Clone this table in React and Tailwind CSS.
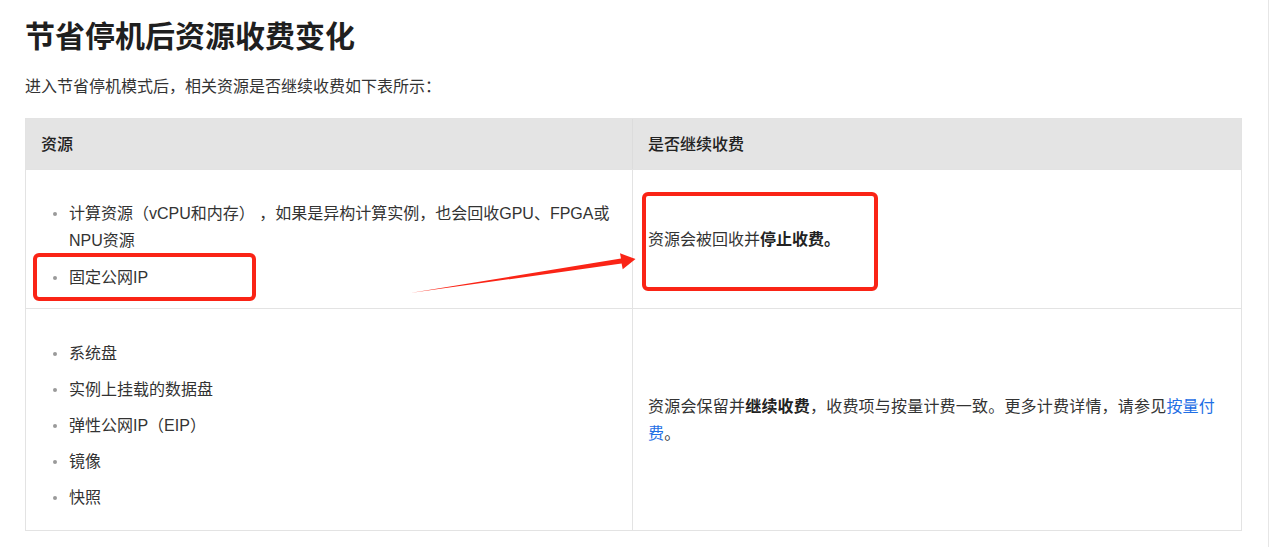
import React from "react";

const font = { fontFamily: '"Liberation Sans", "Noto Sans CJK SC", sans-serif' };

function Item({ children, wide }) {
  return (
    <li className={wide ? "flex items-start mt-[10px] first:mt-0" : "flex items-start mt-[9px] first:mt-0"}>
      <span className="w-[4px] h-[4px] rounded-full bg-[#9a9a9a] mt-[12px] mr-[12px] shrink-0" />
      <span>{children}</span>
    </li>
  );
}

export default function App() {
  return (
    <div
      className="relative w-[1269px] h-[547px] border-r border-[#e6e6e6] bg-white text-[#333] overflow-hidden"
      style={font}
    >
      <div className="pl-[25px] pt-[17px]">
        <h1 className="text-[30px] leading-[40px] font-bold text-[#1f1f1f]">
          节省停机后资源收费变化
        </h1>
        <p className="mt-[18px] text-[16px] leading-[24px] text-[#333]">
          进入节省停机模式后，相关资源是否继续收费如下表所示：
        </p>

        <div className="mt-[19px] w-[1217px] border border-[#e3e3e3] text-[16px] leading-[27px]">
          <div className="flex h-[51px] bg-[#e4e4e4] border-b border-[#e3e3e3] font-medium text-[#222]">
            <div className="w-[606px] px-[15px] flex items-center">资源</div>
            <div className="flex-1 px-[15px] flex items-center border-l border-[#dcdcdc]">
              是否继续收费
            </div>
          </div>

          <div className="flex h-[139px] border-b border-[#e3e3e3]">
            <div className="w-[606px] pl-[15px] pr-[15px] pt-[30px]">
              <ul className="pl-[12px]">
                <Item wide>
                  计算资源（vCPU和内存） ，如果是异构计算实例，也会回收GPU、FPGA或NPU资源
                </Item>
                <Item wide>固定公网IP</Item>
              </ul>
            </div>
            <div className="flex-1 px-[15px] flex items-center border-l border-[#e3e3e3]">
              <p>
                资源会被回收并<b className="font-bold text-[#222]">停止收费。</b>
              </p>
            </div>
          </div>

          <div className="flex h-[221px]">
            <div className="w-[606px] pl-[15px] pr-[15px] pt-[31px]">
              <ul className="pl-[12px]">
                <Item>系统盘</Item>
                <Item>实例上挂载的数据盘</Item>
                <Item>弹性公网IP（EIP）</Item>
                <Item>镜像</Item>
                <Item>快照</Item>
              </ul>
            </div>
            <div className="flex-1 px-[15px] flex items-center border-l border-[#e3e3e3]">
              <p className="tracking-[0.2px]">
                资源会保留并<b className="font-bold text-[#222]">继续收费</b>
                ，收费项与按量计费一致。更多计费详情，请参见
                <a className="text-[#1f6fe5]">按量付费</a>。
              </p>
            </div>
          </div>
        </div>
      </div>

      <svg
        className="absolute left-0 top-0 pointer-events-none"
        width="1272"
        height="547"
        viewBox="0 0 1272 547"
      >
        <rect x="35" y="255" width="219" height="44" rx="4" fill="none" stroke="#fa2416" strokeWidth="4" />
        <rect x="644" y="194" width="232" height="95" rx="4" fill="none" stroke="#fa2416" strokeWidth="4" />
        <polygon
          points="410,293 621,258.6 620,253.3 635.5,259 622.7,269.3 621.6,263.6"
          fill="#fa2416"
        />
      </svg>
    </div>
  );
}
